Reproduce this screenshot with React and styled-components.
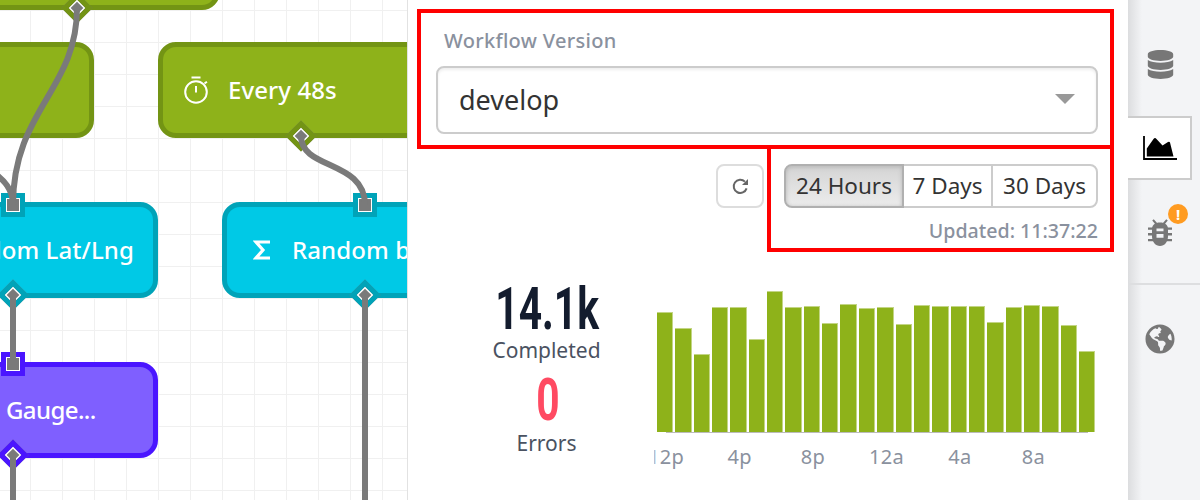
import styled, { createGlobalStyle } from "styled-components";
import { FaDatabase, FaGlobeAmericas } from "react-icons/fa";

const GlobalStyle = createGlobalStyle`
    html, body {
        margin: 0;
        background: #fff;
        font-family: "Noto Sans", "Open Sans", sans-serif;
    }
`

const BAR_TOPS = [
    311.7, 328, 354, 307.3, 307.3, 338.7, 290.7, 307.3, 306, 322.7, 304.3, 307.7,
    306.7, 323.7, 305, 306.3, 306, 306.3, 322.3, 307, 305.3, 306, 325, 350.7,
];
const BASELINE = 432;

const AXIS_LABELS = ["12p", "4p", "8p", "12a", "4a", "8a"];

const NODES = [
    { id: "top", tone: "green", left: -120, top: -86, width: 340 },
    { id: "left", tone: "green", left: -120, top: 42, width: 214 },
    { id: "every", tone: "green", left: 158, top: 42, width: 300, label: "Every 48s", icon: "timer", textLeft: 70 },
    { id: "lat", tone: "cyan", left: -120, top: 202, width: 278, label: "Random Lat/Lng", align: true },
    { id: "rand", tone: "cyan", left: 222, top: 202, width: 300, label: "Random boolean", icon: "sigma", textLeft: 70 },
    { id: "gauge", tone: "purple", left: -120, top: 362, width: 278, label: "Gauge...", textLeft: 126, tight: true },
];

const PORTS = [
    { kind: "diamond", tone: "green", x: 77, y: 8 },
    { kind: "diamond", tone: "green", x: 301, y: 136 },
    { kind: "square", tone: "cyan", x: 13, y: 205 },
    { kind: "square", tone: "cyan", x: 365, y: 205 },
    { kind: "diamond", tone: "cyan", x: 13, y: 295 },
    { kind: "diamond", tone: "cyan", x: 365, y: 295 },
    { kind: "square", tone: "purple", x: 13, y: 364 },
    { kind: "diamond", tone: "purple", x: 13, y: 455 },
];

const TONES = {
    green: { fill: "#8eb21a", edge: "#739414" },
    cyan: { fill: "#00c9e6", edge: "#00a3b8" },
    purple: { fill: "#7f5fff", edge: "#4a15ff" },
};

const TimerIcon = () => (
    <svg width="26" height="28" viewBox="0 0 26 28" fill="none" stroke="#fff" strokeWidth="2">
        <circle cx="13" cy="16" r="10.8" />
        <path d="M8.500 1.500h9M13 10v6.500M21.500 7.500l2.400-1.800" />
    </svg>
);

const SigmaIcon = () => (
    <svg width="18" height="20" viewBox="0 0 18 20" fill="none" stroke="#fff" strokeWidth="3.2">
        <path d="M17 2H3l7 8-7 8h14" />
    </svg>
);

const RefreshIcon = () => (
    <svg width="17" height="17" viewBox="0 0 17 17" fill="none" stroke="#666" strokeWidth="2">
        <path d="M14.600 10.400A6.600 6.600 0 1 1 12.900 3.600" />
        <path d="M16 1v6h-6z" fill="#666" stroke="none" />
    </svg>
);

const AreaIcon = () => (
    <svg width="34" height="25" viewBox="0 0 34 25">
        <path d="M1 0v23h33" fill="none" stroke="#000" strokeWidth="1.800" />
        <path d="M3.800 20.500V12.500L10.500 3q1.500-1.800 3 0l6 6.500 5.500-3.500q1.500-.8 2 .5l3.500 14z" fill="#000" />
    </svg>
);

const BugIcon = () => (
    <svg width="24" height="28" viewBox="0 0 24 28">
        <path d="M5 .8L8.500 5M19 .8L15.500 5" fill="none" stroke="#777" strokeWidth="2" />
        <path d="M0 8.500h24v2.200H0zM0 14h24v2.500H0zM0 20h24v2.200H0z" fill="#777" />
        <path d="M4 10C4 6 7 3.500 12 3.500S20 6 20 10v7c0 6-3.500 10-8 10S4 23 4 17z" fill="#777" />
        <path d="M8.500 9.500h7v2.800h-7zM8.500 15h7v3.800h-7z" fill="#f3f4f6" />
    </svg>
);

const App = () => {
    return (
        <Page>
            <GlobalStyle />
            <Canvas>
                {NODES.map(n => (
                    <Node key={n.id} $tone={n.tone} $left={n.left} $top={n.top} $width={n.width}>
                        {n.icon === "timer" && <NodeIcon $left={25}><TimerIcon /></NodeIcon>}
                        {n.icon === "sigma" && <NodeIcon $left={31}><SigmaIcon /></NodeIcon>}
                        {n.label && <NodeLabel $left={n.textLeft} $right={n.align} $tight={n.tight}>{n.label}</NodeLabel>}
                    </Node>
                ))}
                {PORTS.map(p => (
                    p.kind === "diamond"
                        ? <Diamond key={`${p.x}-${p.y}`} $tone={p.tone} $x={p.x} $y={p.y} />
                        : <Square key={`${p.x}-${p.y}`} $tone={p.tone} $x={p.x} $y={p.y} />
                ))}
                <Wires width="407" height="500" viewBox="0 0 407 500">
                    <path d="M77 8C77 90 13 110 13 205" />
                    <path d="M-10 170C5 180 13 190 13 205" />
                    <path d="M301 136C301 170 365 160 365 205" />
                    <path d="M13 295V364" />
                    <path d="M365 295V510" />
                    <path d="M13 455V510" />
                </Wires>
            </Canvas>

            <Panel>
                <VersionBlock>
                    <FieldLabel>Workflow Version</FieldLabel>
                    <SelectBox>
                        <span>develop</span>
                        <Caret />
                    </SelectBox>
                </VersionBlock>

                <RangeRow>
                    <RefreshButton type="button"><RefreshIcon /></RefreshButton>
                    <Segments>
                        <Segment type="button" $width={120} $active>24 Hours</Segment>
                        <Segment type="button" $width={91}>7 Days</Segment>
                        <Segment type="button" $width={107}>30 Days</Segment>
                    </Segments>
                </RangeRow>
                <Updated>Updated: 11:37:22</Updated>

                <StatsRow>
                    <Stats>
                        <BigNumber><span>14.1k</span></BigNumber>
                        <StatName>Completed</StatName>
                        <BigNumber $error><span>0</span></BigNumber>
                        <StatName>Errors</StatName>
                    </Stats>
                    <Chart>
                        <Bars>
                            {BAR_TOPS.map((top, i) => (
                                <Bar key={i} style={{ height: BASELINE - top }} />
                            ))}
                            <AxisLine />
                        </Bars>
                        <AxisLabels>
                            {AXIS_LABELS.map(l => <AxisLabel key={l}>{l}</AxisLabel>)}
                        </AxisLabels>
                    </Chart>
                </StatsRow>

                <RedBox $left={9} $top={9} $width={697} $height={140} />
                <RedBox $left={359} $top={145} $width={347} $height={107} />
            </Panel>

            <Rail>
                <RailTab $pad={12}><FaDatabase size={29} color="#777" /></RailTab>
                <RailTab $active><AreaIcon /></RailTab>
                <RailTab $divided>
                    <BugIcon />
                    <Badge>!</Badge>
                </RailTab>
                <RailTab $globe><FaGlobeAmericas size={30} color="#777" /></RailTab>
            </Rail>
        </Page>
    );
}

const Page = styled.div`
    display: flex;
    width: 1200px;
    height: 500px;
    overflow: hidden;
`

const Canvas = styled.div`
    position: relative;
    flex: 0 0 407px;
    overflow: hidden;
    background-color: #fff;
    background-image:
        linear-gradient(to right, #f0f0f0 1px, transparent 1px),
        linear-gradient(to bottom, #f0f0f0 1px, transparent 1px);
    background-size: 32px 32px;
    background-position: 30px 10px;
`

const Node = styled.div`
    position: absolute;
    left: ${p => p.$left}px;
    top: ${p => p.$top}px;
    width: ${p => p.$width}px;
    height: 96px;
    box-sizing: border-box;
    display: flex;
    align-items: center;
    background: ${p => TONES[p.$tone].fill};
    border: 5px solid ${p => TONES[p.$tone].edge};
    border-radius: 18px;
`

const NodeIcon = styled.span`
    position: absolute;
    left: ${p => p.$left - 5}px;
    top: 50%;
    transform: translateY(-50%);
    display: flex;
`

const NodeLabel = styled.span`
    position: absolute;
    ${p => p.$right ? "right: 19px;" : `left: ${p.$left - 5}px;`}
    margin-top: -2px;
    color: #fff;
    font-size: 24px;
    font-weight: 500;
    letter-spacing: ${p => p.$tight ? "-0.6px" : "0.1px"};
    white-space: nowrap;
`

const Wires = styled.svg`
    position: absolute;
    left: 0;
    top: 0;
    fill: none;
    stroke: #7a7a7a;
    stroke-width: 6;
`

const Diamond = styled.div`
    position: absolute;
    left: ${p => p.$x - 11}px;
    top: ${p => p.$y - 11}px;
    width: 22px;
    height: 22px;
    box-sizing: border-box;
    transform: rotate(45deg);
    background: #7a7a7a;
    border: 5px solid ${p => TONES[p.$tone].edge};
    box-shadow: inset 0 0 0 1.5px #fff;
`

const Square = styled.div`
    position: absolute;
    left: ${p => p.$x - 12}px;
    top: ${p => p.$y - 12}px;
    width: 24px;
    height: 24px;
    box-sizing: border-box;
    background: #7a7a7a;
    border: 5px solid ${p => TONES[p.$tone].edge};
    box-shadow: inset 0 0 0 1px #fff;
`

const Panel = styled.div`
    position: relative;
    flex: 1;
    box-sizing: border-box;
    padding: 0 30px 0 28px;
    border-left: 1px solid #e2e2e2;
`

const VersionBlock = styled.div`
    padding-top: 27px;
`

const FieldLabel = styled.div`
    margin-left: 8px;
    font-size: 20px;
    font-weight: 500;
    letter-spacing: 0.3px;
    line-height: 27px;
    color: #8a919e;
`

const SelectBox = styled.div`
    margin-top: 12px;
    height: 68px;
    box-sizing: border-box;
    display: flex;
    align-items: center;
    justify-content: space-between;
    padding: 0 21px 2px;
    border: 2px solid #ccc;
    border-radius: 8px;
    box-shadow: inset 0 2px 3px #eee;
    font-size: 27px;
    color: #333;
`

const Caret = styled.span`
    width: 0;
    height: 0;
    border-style: solid;
    border-width: 10px 10px 0;
    border-color: #999 transparent transparent;
`

const RangeRow = styled.div`
    display: flex;
    justify-content: flex-end;
    gap: 20px;
    margin-top: 30px;
`

const RefreshButton = styled.button`
    width: 48px;
    height: 44px;
    padding: 0;
    display: flex;
    align-items: center;
    justify-content: center;
    background: #fff;
    border: 2px solid #ddd;
    border-radius: 8px;
`

const Segments = styled.div`
    display: flex;
    height: 44px;
`

const Segment = styled.button`
    position: relative;
    z-index: ${p => p.$active ? 1 : 0};
    box-sizing: border-box;
    width: ${p => p.$width}px;
    margin-left: -2px;
    padding: 0 0 2px;
    font-family: inherit;
    font-size: 22.5px;
    color: #333;
    border: 2px solid ${p => p.$active ? "#b0b0b0" : "#ccc"};
    background: ${p => p.$active ? "linear-gradient(#d4d4d4, #ececec)" : "#fff"};
    box-shadow: ${p => p.$active ? "inset 0 1px 4px #b5b5b5" : "none"};

    &:first-child {
        margin-left: 0;
        border-radius: 8px 0 0 8px;
    }
    &:last-child {
        border-radius: 0 8px 8px 0;
    }
`

const Updated = styled.div`
    margin-top: 9px;
    text-align: right;
    font-size: 19.6px;
    font-weight: 500;
    line-height: 28px;
    color: #8a919e;
`

const StatsRow = styled.div`
    display: flex;
    margin-top: 36px;
`

const Stats = styled.div`
    width: 193px;
    margin-left: 15px;
    text-align: center;
`

const BigNumber = styled.div`
    font-family: "Roboto", sans-serif;
    font-weight: 700;
    font-size: 59px;
    line-height: 56px;
    color: ${p => p.$error ? "#ff4a62" : "#131c2e"};
    ${p => p.$error && "margin: 9px 0 2px;"}

    span {
        display: inline-block;
        transform: scaleX(0.69);
    }
`

const StatName = styled.div`
    margin-left: -2px;
    font-size: 21px;
    line-height: 26px;
    color: #4a5261;
`

const Chart = styled.div`
    width: 438.4px;
    margin: 5px 0 0 13px;
`

const Bars = styled.div`
    position: relative;
    display: grid;
    grid-template-columns: repeat(24, 1fr);
    column-gap: 2px;
    align-items: end;
    height: 146px;
`

const Bar = styled.div`
    box-sizing: border-box;
    background: #8eb21a;
    border: 1px solid #c3d585;
    border-width: 1px 1px 0 0;
`

const AxisLine = styled.div`
    position: absolute;
    left: 9px;
    right: 7px;
    bottom: -1px;
    height: 1.5px;
    background: #bbb;
`

const AxisLabels = styled.div`
    display: grid;
    grid-template-columns: repeat(6, 73.44px);
    margin-top: 12px;
    margin-left: -27.6px;
    width: 465px;
    clip-path: inset(0 0 0 25px);
`

const AxisLabel = styled.span`
    text-align: center;
    font-size: 20px;
    letter-spacing: 0.3px;
    line-height: 26px;
    color: #8a919e;
`

const RedBox = styled.div`
    position: absolute;
    left: ${p => p.$left}px;
    top: ${p => p.$top}px;
    width: ${p => p.$width}px;
    height: ${p => p.$height}px;
    box-sizing: border-box;
    border: 4px solid #f00;
    pointer-events: none;
`

const Rail = styled.div`
    flex: 0 0 72px;
    display: flex;
    flex-direction: column;
    background: linear-gradient(to right, #dcdddf, #f3f4f6 14px);
`

const RailTab = styled.div`
    position: relative;
    display: flex;
    align-items: center;
    justify-content: center;
    box-sizing: border-box;
    width: 64px;
    height: ${p => p.$globe ? "108px" : p.$divided ? "105px" : p.$active ? "64px" : "116px"};
    padding-top: ${p => p.$pad || 0}px;
    ${p => p.$active && `
        background: #fff;
        border: 2px solid #ccc;
        border-left: none;
        padding-left: 2px;
    `}
    ${p => p.$divided && `
        width: 72px;
        padding-right: 8px;
        padding-top: 2px;
        border-bottom: 2px solid #dddee0;
    `}
`

const Badge = styled.span`
    position: absolute;
    left: 40px;
    top: 24px;
    width: 20px;
    height: 20px;
    border-radius: 50%;
    background: #ff9b21;
    color: #fff;
    font-size: 15px;
    font-weight: 700;
    line-height: 20px;
    text-align: center;
`

export default App;
